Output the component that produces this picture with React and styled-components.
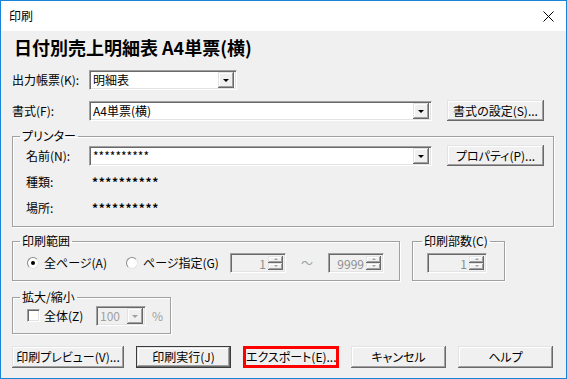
import React from 'react';
import styled, {createGlobalStyle, css} from 'styled-components';

const GlobalStyle = createGlobalStyle`
  html, body {
    margin: 0;
    padding: 0;
    background: #ffffff;
  }
  body {
    font-family: "Noto Sans CJK JP", "Noto Sans", sans-serif;
    font-size: 12px;
    color: #000;
    font-feature-settings: "palt";
  }
`;

const Window = styled.div`
  width: 567px;
  height: 379px;
  box-sizing: border-box;
  border: 1px solid #1883d7;
  display: flex;
  flex-direction: column;
  background: #f0f0f0;
`;

const TitleBar = styled.div`
  height: 30px;
  flex-shrink: 0;
  background: #ffffff;
  display: flex;
  align-items: center;
  padding-left: 8px;
  padding-right: 12px;
`;

const TitleText = styled.span`
  flex: 1;
  font-size: 12px;
  line-height: 16px;
`;

const Body = styled.div`
  flex: 1;
  padding: 0 12px 0 11px;
  display: flex;
  flex-direction: column;
`;

const Heading = styled.div`
  margin-top: 5px;
  height: 22px;
  line-height: 22px;
  font-size: 18px;
  font-weight: 700;
  padding-left: 2px;
  white-space: nowrap;
`;

const Row = styled.div`
  display: flex;
  align-items: center;
  height: ${p => p.h || 21}px;
  margin-top: ${p => p.mt || 0}px;
  gap: ${p => p.gap || 0}px;
`;

const Label = styled.span`
  width: ${p => p.w}px;
  flex-shrink: 0;
  line-height: 16px;
  white-space: nowrap;
  color: ${p => p.disabled ? '#a0a0a0' : '#000'};
`;

const sunken = css`
  box-sizing: border-box;
  border: 1px solid;
  border-color: #a0a0a0 #ffffff #ffffff #a0a0a0;
  box-shadow: inset 1px 1px #696969, inset -1px -1px #e3e3e3;
`;

const raised = css`
  box-shadow: inset -1px -1px #696969, inset 1px 1px #e3e3e3,
    inset -2px -2px #a0a0a0, inset 2px 2px #ffffff;
`;

const Combo = styled.div`
  ${sunken};
  width: ${p => p.w}px;
  height: 20px;
  display: flex;
  align-items: center;
  padding: 2px;
  background: ${p => p.disabled ? '#f0f0f0' : '#ffffff'};
  color: ${p => p.disabled ? '#a0a0a0' : '#000'};
`;

const ComboText = styled.span`
  flex: 1;
  padding-left: 1px;
  line-height: 16px;
  white-space: nowrap;
`;

const DropButton = styled.span`
  ${raised};
  width: 16px;
  height: 16px;
  flex-shrink: 0;
  background: #f0f0f0;
  display: flex;
  align-items: center;
  justify-content: center;
`;

const Arrow = styled.span`
  width: 0;
  height: 0;
  border-left: 3px solid transparent;
  border-right: 3px solid transparent;
  border-top: 3px solid ${p => p.disabled ? '#a0a0a0' : '#000'};
  margin-top: 1px;
`;

const Button = styled.button`
  box-sizing: border-box;
  width: ${p => p.w}px;
  height: ${p => p.h || 21}px;
  flex-shrink: 0;
  margin: 0;
  padding: 0;
  border: none;
  background: #f0f0f0;
  font-family: inherit;
  font-feature-settings: "palt";
  font-size: 12px;
  line-height: 14px;
  color: #000;
  white-space: nowrap;
  ${raised};

  ${p => p.isDefault && css`
    border: 1px solid #3c3c3c;
  `}
  ${p => p.highlight && css`
    border: 3px solid #ff0000;
    box-shadow: none;
  `}
`;

const Group = styled.fieldset`
  box-sizing: border-box;
  margin: 0 0 0 ${p => p.ml || 0}px;
  padding: 0;
  min-width: 0;
  width: ${p => p.w}px;
  height: ${p => p.h}px;
  border: 1px solid #a0a0a0;
  box-shadow: 1px 1px #ffffff, inset 1px 1px #ffffff;
  flex-shrink: 0;
`;

const Legend = styled.legend`
  margin-left: ${p => p.ml || 7}px;
  padding: 0 2px;
  font-size: 12px;
  line-height: 14px;
  white-space: nowrap;
`;

const GroupBody = styled.div`
  padding: ${p => p.pad};
`;

const Info = styled.span`
  letter-spacing: 0.6px;
  font-weight: 700;
  line-height: 16px;
`;

const GroupRow = styled.div`
  display: flex;
  align-items: flex-start;
  margin-top: ${p => p.mt}px;
`;

const Choice = styled.label`
  width: ${p => p.w}px;
  flex-shrink: 0;
  display: flex;
  align-items: center;
  gap: ${p => p.gap || 5}px;
  line-height: 16px;
  white-space: nowrap;
`;

const RadioDot = styled.span`
  width: 12px;
  height: 12px;
  box-sizing: border-box;
  border-radius: 50%;
  border: 1px solid #8a8a8a;
  border-right-color: #e3e3e3;
  border-bottom-color: #e3e3e3;
  background: #ffffff;
  display: flex;
  align-items: center;
  justify-content: center;

  &::after {
    content: "";
    width: 4px;
    height: 4px;
    border-radius: 50%;
    background: ${p => p.checked ? '#000' : 'transparent'};
  }
`;

const CheckBox = styled.span`
  ${sunken};
  width: 13px;
  height: 13px;
  background: #ffffff;
`;

const Spin = styled.div`
  ${sunken};
  width: ${p => p.w}px;
  height: 20px;
  display: flex;
  align-items: stretch;
  padding: 2px;
  background: #f0f0f0;
  flex-shrink: 0;
`;

const SpinValue = styled.span`
  flex: 1;
  text-align: right;
  padding-right: 2px;
  line-height: 16px;
  color: #8d8d8d;
`;

const SpinButtons = styled.span`
  width: 15px;
  display: flex;
  flex-direction: column;
`;

const SpinHalf = styled.span`
  ${raised};
  flex: 1;
  display: flex;
  align-items: center;
  justify-content: center;
  background: #f0f0f0;
`;

const SmallArrow = styled.span`
  width: 0;
  height: 0;
  border-left: 2px solid transparent;
  border-right: 2px solid transparent;
  ${p => p.up
    ? css`border-bottom: 2px solid #a0a0a0;`
    : css`border-top: 2px solid #a0a0a0;`}
`;

const Tilde = styled.span`
  width: 42px;
  text-align: center;
  color: #a0a0a0;
  line-height: 16px;
`;

const Percent = styled.span`
  margin-left: 6px;
  color: #a0a0a0;
  line-height: 16px;
`;

const ButtonBar = styled.div`
  display: flex;
  gap: 12px;
  margin-top: 12px;
`;

function Dropdown({w, value, disabled}) {
    return (
        <Combo w={w} disabled={disabled}>
            <ComboText>{value}</ComboText>
            <DropButton>
                <Arrow disabled={disabled}/>
            </DropButton>
        </Combo>
    );
}

function Spinner({w, value}) {
    return (
        <Spin w={w}>
            <SpinValue>{value}</SpinValue>
            <SpinButtons>
                <SpinHalf><SmallArrow up/></SpinHalf>
                <SpinHalf><SmallArrow/></SpinHalf>
            </SpinButtons>
        </Spin>
    );
}

function CloseIcon() {
    return (
        <svg width="11" height="11" viewBox="0 0 11 11" xmlns="http://www.w3.org/2000/svg">
            <path d="M0.5 0.5 L10.5 10.5 M10.5 0.5 L0.5 10.5" stroke="#000" strokeWidth="1" fill="none"/>
        </svg>
    );
}

export default function App() {
    return (
        <>
            <GlobalStyle/>
            <Window>
                <TitleBar>
                    <TitleText>印刷</TitleText>
                    <CloseIcon/>
                </TitleBar>
                <Body>
                    <Heading>日付別売上明細表 A4単票(横)</Heading>

                    <Row mt={11}>
                        <Label w={77}>出力帳票(K):</Label>
                        <Dropdown w={148} value="明細表"/>
                    </Row>

                    <Row mt={10}>
                        <Label w={77}>書式(F):</Label>
                        <Dropdown w={343} value="A4単票(横)"/>
                        <Button w={97} style={{marginLeft: 15}}>書式の設定(S)...</Button>
                    </Row>

                    <Row h={98} mt={8}>
                        <Group w={542} h={98}>
                            <Legend>プリンター</Legend>
                            <GroupBody pad="2px 9px 0 13px">
                                <Row>
                                    <Label w={63}>名前(N):</Label>
                                    <Dropdown w={343} value="**********"/>
                                    <Button w={97} style={{marginLeft: 15}}>プロパティ(P)...</Button>
                                </Row>
                                <Row h={26} mt={3}>
                                    <Label w={66}>種類:</Label>
                                    <Info>**********</Info>
                                </Row>
                                <Row h={26}>
                                    <Label w={66}>場所:</Label>
                                    <Info>**********</Info>
                                </Row>
                            </GroupBody>
                        </Group>
                    </Row>

                    <GroupRow mt={7}>
                        <Group w={388} h={47}>
                            <Legend>印刷範囲</Legend>
                            <GroupBody pad="4px 0 0 14px">
                                <Row>
                                    <Choice w={99}><RadioDot checked/>全ページ(A)</Choice>
                                    <Choice w={104}><RadioDot/>ページ指定(G)</Choice>
                                    <Spinner w={56} value="1"/>
                                    <Tilde>～</Tilde>
                                    <Spinner w={56} value="9999"/>
                                </Row>
                            </GroupBody>
                        </Group>
                        <Group w={93} h={47} ml={12}>
                            <Legend ml={9}>印刷部数(C)</Legend>
                            <GroupBody pad="4px 0 0 14px">
                                <Row>
                                    <Spinner w={60} value="1"/>
                                </Row>
                            </GroupBody>
                        </Group>
                    </GroupRow>

                    <GroupRow mt={9}>
                        <Group w={159} h={44}>
                            <Legend>拡大/縮小</Legend>
                            <GroupBody pad="1px 0 0 14px">
                                <Row>
                                    <Choice w={69} gap={4}><CheckBox/>全体(Z)</Choice>
                                    <Dropdown w={50} value="100" disabled/>
                                    <Percent>%</Percent>
                                </Row>
                            </GroupBody>
                        </Group>
                    </GroupRow>

                    <ButtonBar>
                        <Button w={112} h={22}>印刷プレビュー(V)...</Button>
                        <Button w={95} h={22} isDefault>印刷実行(J)</Button>
                        <Button w={96} h={22} highlight>エクスポート(E)...</Button>
                        <Button w={95} h={22}>キャンセル</Button>
                        <Button w={95} h={22}>ヘルプ</Button>
                    </ButtonBar>
                </Body>
            </Window>
        </>
    );
}
